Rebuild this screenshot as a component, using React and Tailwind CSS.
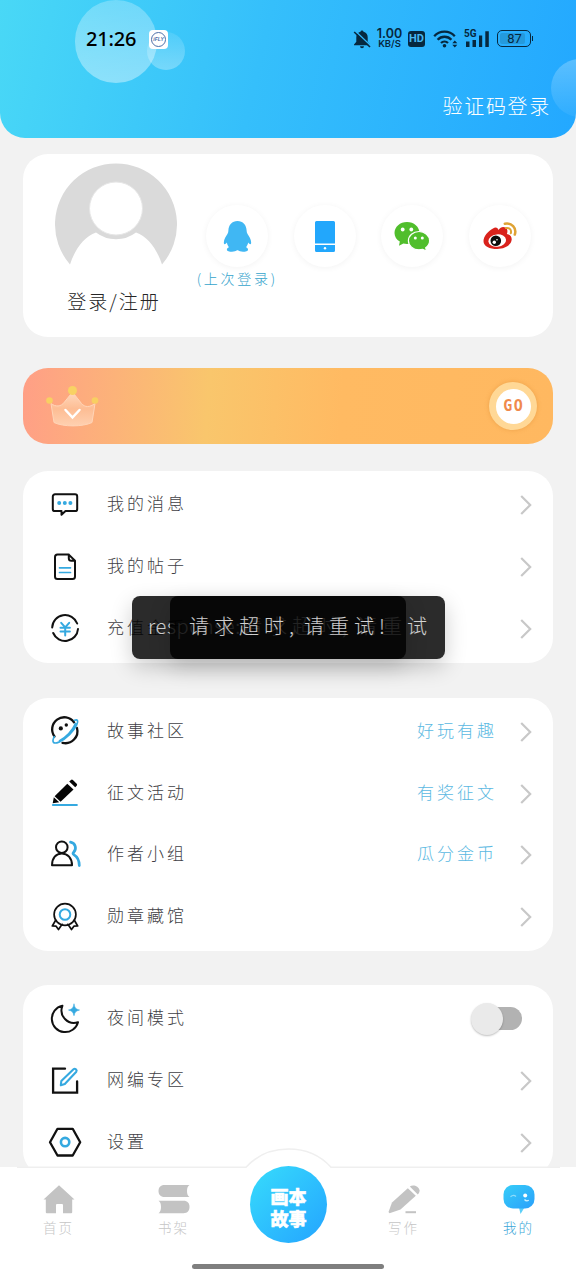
import { useState } from 'react';

const BLUE = '#35a9e0';

const MENU_MESSAGES = [
  { label: '我的消息', icon: 'message' },
  { label: '我的帖子', icon: 'post' },
  { label: '充值金币', icon: 'coin' },
];

const MENU_COMMUNITY = [
  { label: '故事社区', icon: 'planet', hint: '好玩有趣' },
  { label: '征文活动', icon: 'pen', hint: '有奖征文' },
  { label: '作者小组', icon: 'group', hint: '瓜分金币' },
  { label: '勋章藏馆', icon: 'medal' },
];

const MENU_SETTINGS = [
  { label: '夜间模式', icon: 'moon', toggle: true },
  { label: '网编专区', icon: 'edit' },
  { label: '设置', icon: 'settings' },
];

const ICONS = {
  message: (
    <>
      <path d="M8 7.300h20a2.200 2.200 0 0 1 2.200 2.200v12.400a2.200 2.200 0 0 1-2.200 2.200H18.500L14.500 27.800v-3.700H8a2.200 2.200 0 0 1-2.200-2.200V9.500A2.200 2.200 0 0 1 8 7.300z" />
      <g fill={BLUE} stroke="none">
        <circle cx="12.200" cy="16" r="2" />
        <circle cx="17.800" cy="16" r="2" />
        <circle cx="23.400" cy="16" r="2" />
      </g>
    </>
  ),
  post: (
    <>
      <path d="M10.500 5.600h11.300l6.200 6.200v15.700a2.500 2.500 0 0 1-2.500 2.500h-15A2.500 2.500 0 0 1 8 27.500V8.100a2.500 2.500 0 0 1 2.500-2.500zM21.800 5.600v3.700a2.500 2.500 0 0 0 2.500 2.500H28" />
      <path d="M12.500 18.800h11M12.500 23.500h11" stroke={BLUE} strokeWidth="1.700" />
    </>
  ),
  coin: (
    <>
      <path d="M5.200 17.500A12.900 12.900 0 0 1 30.200 13.500M31 19A12.900 12.900 0 0 1 6.200 23" />
      <path d="M14.200 12.800l4 4.600 4-4.600M18.200 17.400v8M13.500 17.800h9.400M13.500 21.500h9.400" stroke={BLUE} strokeWidth="2" />
    </>
  ),
  planet: (
    <>
      <path d="M7.500 23.500A12 12 0 0 1 27 9.200M30 15A12 12 0 0 1 15.500 29.800" strokeWidth="2.300" />
      <path d="M27.500 7.300c3-1.400 4.200.5 2.200 4.600-2.800 6-10.500 14.200-17.800 17.200-5.500 2.200-7.400.4-4.700-5.400M28.500 10.500c-3 6.500-9.500 13.500-16 17.200" stroke={BLUE} strokeWidth="1.700" />
      <circle cx="13.800" cy="15.400" r="2.100" fill="#111" stroke="none" />
      <circle cx="19.300" cy="12" r="1.700" fill="#111" stroke="none" />
    </>
  ),
  pen: (
    <>
      <g fill="#050505" stroke="none">
        <path d="M20.300 8.800l6.200 5.800-12.900 12.200-6-5.500z" />
        <path d="M22.200 6.500l1.800-1.500a1.400 1.400 0 0 1 1.900.1l3.800 3.700a1.400 1.400 0 0 1 0 1.900l-1.500 1.600z" />
        <path d="M6.800 22.300l5.400 5L5.700 28.300z" />
      </g>
      <path d="M5.900 30h24" stroke={BLUE} strokeWidth="2" />
    </>
  ),
  group: (
    <>
      <circle cx="14.800" cy="10.200" r="5.800" />
      <path d="M5 28.200c0-7 4-11.800 9.800-11.800s10.200 4.800 10.200 11.800z" />
      <path d="M23.500 5.200c5.200 1 6.500 6.700 3 10.300-.8.900-.7 1.500.3 2.100 3.600 2.200 5.500 5.800 5.500 11" stroke={BLUE} strokeWidth="2.700" />
    </>
  ),
  medal: (
    <g strokeWidth="1.700">
      <circle cx="18" cy="15.500" r="10.900" />
      <circle cx="18" cy="15.500" r="5.300" stroke={BLUE} strokeWidth="2" />
      <path d="M8.500 21.500L5.300 27l3.800.2 2.400 3.300 3.600-5.200M27.500 21.500l3.200 5.500-3.800.2-2.400 3.300-3.600-5.200" />
    </g>
  ),
  moon: (
    <>
      <path d="M15.400 4.800A13.300 13.300 0 1 0 31 21.200 12.500 12.500 0 0 1 15.400 4.800z" />
      <path d="M27 3.200c.9 4 1.800 4.900 5.500 5.800-3.700 1-4.600 1.900-5.500 5.700-.9-3.800-1.800-4.700-5.500-5.700 3.700-.9 4.600-1.800 5.500-5.800z" fill={BLUE} stroke={BLUE} strokeWidth=".6" />
    </>
  ),
  edit: (
    <>
      <path d="M18 5.700H6.100v24h24V18.500" strokeWidth="2.300" strokeLinejoin="miter" />
      <path d="M14.300 18L26.500 6.200c1.500-1.200 4 .8 2.800 2.500L17.800 21l-4 1.300z" stroke={BLUE} strokeWidth="2.100" />
    </>
  ),
  settings: (
    <>
      <path d="M10.500 4.800h15.200L33.200 18.200l-7.500 13.300H10.500L3 18.200z" strokeWidth="2.300" />
      <circle cx="18.100" cy="18.100" r="4.200" stroke={BLUE} strokeWidth="2.600" />
    </>
  ),
};

const MenuIcon = ({ name }) => (
  <svg
    viewBox="0 0 36 36"
    className="w-9 h-9 shrink-0"
    fill="none"
    stroke="#111"
    strokeWidth="2"
    strokeLinejoin="round"
    strokeLinecap="round"
  >
    {ICONS[name]}
  </svg>
);

const Chevron = () => (
  <svg viewBox="0 0 12 20" className="w-3 h-5 mt-px" fill="none" stroke="#c8c8c8" strokeWidth="2.200">
    <path d="M1.200 1l9 9-9 9" />
  </svg>
);

const MenuCard = ({ items, className = '', renderToggle }) => (
  <div className={`bg-white rounded-[25px] pl-6 pr-[21px] shrink-0 ${className}`}>
    {items.map((item) => (
      <div key={item.label} className="h-[61.800px] flex items-center">
        <MenuIcon name={item.icon} />
        <span className="ml-6 text-[17px] leading-6 tracking-[3px] text-[#3f3f46] pb-[3px]">{item.label}</span>
        <div className="ml-auto flex items-center">
          {item.hint && (
            <span className="mr-[23px] text-[17px] leading-6 tracking-[3px] text-[#5bb9e2] pb-[3px]">{item.hint}</span>
          )}
          {item.toggle ? renderToggle() : <Chevron />}
        </div>
      </div>
    ))}
  </div>
);

const StatusBar = () => (
  <div className="relative h-[78px] pl-[86px] pr-[43px] flex items-center justify-between text-black">
    <div className="flex items-center">
      <span className="w-[52px] font-['Noto_Sans','Open_Sans',sans-serif] font-medium text-[20px] leading-6 tracking-[-0.200px]">21:26</span>
      <div className="ml-[11px] w-[19px] h-[19px] rounded bg-white flex items-center justify-center">
        <div className="w-[15px] h-[15px] rounded-full border border-[#4c6fa8] flex items-center justify-center">
          <span className="font-['Liberation_Sans',sans-serif] font-bold italic text-[5px] leading-none text-[#4c6fa8]">iFLY</span>
        </div>
      </div>
    </div>
    <div className="flex items-center text-[#06283f] -mt-px">
      <svg viewBox="0 0 18 20" className="w-[18px] h-5" fill="currentColor">
        <path d="M9 1.500a1.500 1.500 0 0 1 1.500 1.300c2.700.7 4.200 2.700 4.200 5.400v4.500l2.300 2.800v.8H1v-.8l2.300-2.800V8.200c0-2.700 1.500-4.700 4.200-5.400A1.500 1.500 0 0 1 9 1.500zM7 17.200h4a2 2 0 0 1-4 0z" />
        <path d="M2 1.800L18 17" stroke="#2fb7fd" strokeWidth="1.500" />
        <path d="M1.200 3L17 18" stroke="currentColor" strokeWidth="1.600" />
      </svg>
      <div className="ml-[5px] pt-px w-[27px] flex flex-col items-center font-['Inter','Liberation_Sans',sans-serif] font-semibold">
        <span className="text-[12.500px] leading-[10px]">1.00</span>
        <span className="text-[9.500px] leading-[10px]">KB/S</span>
      </div>
      <div className="ml-[5px] w-[17px] h-4 rounded-[3px] bg-[#06283f] flex items-center justify-center">
        <span className="font-['Roboto','Liberation_Sans',sans-serif] font-bold text-[11px] leading-none text-[#46b8f2]">HD</span>
      </div>
      <svg viewBox="0 0 25 20" className="ml-2 w-[25px] h-5" fill="none" stroke="currentColor" strokeWidth="2.300">
        <path d="M1.200 7.200a14 14 0 0 1 20.600 0M4.600 10.800a9.300 9.300 0 0 1 13.800 0M8 14a5 5 0 0 1 7 0" />
        <circle cx="11.500" cy="16.800" r="1.800" fill="currentColor" stroke="none" />
        <path d="M19.300 14.300L21.800 11.500l2.500 2.800zM19.300 15.800l2.500 2.700 2.500-2.700z" fill="currentColor" stroke="none" />
      </svg>
      <div className="relative ml-[6px] w-[26px] h-5">
        <span className="absolute left-0 top-0 font-['Roboto','Liberation_Sans',sans-serif] font-bold text-[10px] leading-[10px]">5G</span>
        <svg viewBox="0 0 26 20" className="w-[26px] h-5" fill="currentColor">
          <path d="M2 12.500h3.500V18H2zM8.500 11H12v7H8.500zM15 6.500h3.200V18H15zM21.300 2.300h3.500V18h-3.500z" />
        </svg>
      </div>
      <div className="ml-[7px] w-[34px] h-[17px] rounded-[5px] border-[1.500px] border-[#06283f] p-0.5">
        <div className="w-[25px] h-full rounded-xs bg-[#249add] flex items-center justify-center">
          <span className="pl-1 font-['Roboto','Liberation_Sans',sans-serif] font-normal text-[13px] leading-none">87</span>
        </div>
      </div>
      <div className="ml-px w-px h-[5px] bg-[#06283f]" />
    </div>
  </div>
);

const LoginOption = ({ children, note }) => (
  <div className="w-[87.500px] flex flex-col items-center">
    <div className="w-[62px] h-[62px] rounded-full bg-white shadow-[0_1px_6px_rgba(0,0,0,0.050)] flex items-center justify-center">
      {children}
    </div>
    {note && <span className="text-[14px] leading-[22px] tracking-[2.700px] whitespace-nowrap text-[#35a4cc]">{note}</span>}
  </div>
);

const LoginCard = () => (
  <div className="mt-4 h-[183px] shrink-0 bg-white rounded-[25px] flex">
    <div className="ml-8 w-[122px] flex flex-col items-center">
      <svg viewBox="0 0 122 102" className="mt-[9px] w-[122px] h-[102px] shrink-0">
        <path d="M15 101.500A61 61 0 1 1 107 101.500C102 86 93 74 81 69.500a33 33 0 0 1-40 0C29 74 20 86 15 101.500z" fill="#dadada" />
        <circle cx="61" cy="45.500" r="26.500" fill="#fff" stroke="#e6e6e6" strokeWidth="1" />
      </svg>
      <span className="mt-[22px] -ml-1 text-[19px] leading-7 tracking-[2px] text-[#262626] whitespace-nowrap">登录/注册</span>
    </div>
    <div className="ml-[16.500px] pt-[51px] flex items-start">
      <LoginOption note="(上次登录)">
        <svg viewBox="0 0 30 32" className="w-[29px] h-[31px]" fill="#40b7f3">
          <path d="M15 0c5.600 0 9.300 4.200 9.400 9.600 0 1.400.3 2.700 1 3.800 1.800 2.800 4 6.200 3.700 9.500-.2 1.500-1.700 1.300-3-.6-.4 1.900-1.100 3.400-2.200 4.800 1.300.6 2 1.400 2 2.500 0 2.500-8.500 2.800-10.400.7h-1C12.600 32.400 4 32.100 4 29.600c0-1.100.8-1.900 2.100-2.500-1.100-1.400-1.800-2.900-2.200-4.800-1.300 1.900-2.800 2.100-3 .6-.3-3.300 1.900-6.700 3.700-9.500.7-1.100 1-2.400 1-3.800C5.700 4.200 9.400 0 15 0z" />
        </svg>
      </LoginOption>
      <LoginOption>
        <svg viewBox="0 0 20 31" className="w-5 h-[31px]" fill="#22a7fc">
          <path d="M1.500 0h17A1.500 1.500 0 0 1 20 1.500V22.500H0v-21A1.500 1.500 0 0 1 1.500 0zM0 24h20v5.500a1.500 1.500 0 0 1-1.500 1.500h-17A1.500 1.500 0 0 1 0 29.500z" />
          <circle cx="10" cy="27.200" r="1.200" fill="#fff" />
        </svg>
      </LoginOption>
      <LoginOption>
        <svg viewBox="0 0 36 31" className="w-9 h-[31px]" fill="#50be2c">
          <path d="M13 1c6.900 0 12.500 4.900 12.500 11S19.900 23 13 23c-1.300 0-2.500-.1-3.600-.4L5 24.800l.8-4.200C2.500 18.700.5 15.600.5 12 .5 5.900 6.100 1 13 1z" />
          <path d="M25 10.500c5.900 0 10.600 4.100 10.600 9.200 0 2.900-1.500 5.300-3.900 7l.8 3.300-3.800-1.700c-1.100.3-2.300.5-3.700.5-5.900 0-10.600-4.100-10.600-9.100s4.700-9.200 10.600-9.200z" stroke="#fff" strokeWidth="1.200" />
          <g fill="#fff">
            <circle cx="8.700" cy="8.500" r="1.900" />
            <circle cx="17.300" cy="8.500" r="1.900" />
            <circle cx="21.300" cy="17" r="1.500" />
            <circle cx="28.300" cy="17" r="1.500" />
          </g>
        </svg>
      </LoginOption>
      <LoginOption>
        <svg viewBox="0 0 34 28" className="w-[34px] h-7">
          <path d="M10 6.500C12.500 4.800 15 5.500 15.400 8 17.500 5 20 4.200 22.500 5.500c2.300 1.300 2.200 4.500 1.400 6.500 3 .8 5 2.600 4.800 5.600-.4 5.500-7 9.400-14.500 9.400S.5 24.500.5 19C.5 14 5.500 9 10 6.500z" fill="#d9221c" />
          <ellipse cx="14.200" cy="18.600" rx="8.900" ry="6.200" fill="#fff" transform="rotate(-6 14.200 18.600)" />
          <circle cx="12.800" cy="18.800" r="5.300" fill="#0b0b0b" />
          <circle cx="11.300" cy="20.300" r="1.700" fill="#fff" />
          <circle cx="14" cy="17.800" r=".8" fill="#fff" />
          <path d="M21.800 1.700C28.500.3 34 6 31.800 12.500" fill="none" stroke="#dfa335" strokeWidth="2.500" strokeLinecap="round" />
          <path d="M23 6c3.500-.6 5.800 2 4.800 5.300" fill="none" stroke="#dfa335" strokeWidth="2" strokeLinecap="round" />
        </svg>
      </LoginOption>
    </div>
  </div>
);

const VipBanner = () => (
  <div className="mt-[31px] h-[76px] shrink-0 rounded-[25px] bg-[linear-gradient(94deg,#ff9f86_0%,#f9c66c_35%,#ffba62_60%,#ffb860_100%)] pl-[23px] pr-4 flex items-center justify-between">
    <svg viewBox="0 0 54 42" className="w-[54px] h-[42px]">
      <defs>
        <linearGradient id="crown" x1="0" y1="0" x2="0" y2="1">
          <stop offset="0" stopColor="#ffd9bd" />
          <stop offset=".5" stopColor="#fdbd94" />
          <stop offset="1" stopColor="#ffd0b0" />
        </linearGradient>
      </defs>
      <path d="M5 18.500c4.500 3.500 10 3.500 13.500-1.500L26.500 7l9 11.500c3.500 4 8 4 13.500 0l-3 19c-9 4.500-29 4.500-38 0z" fill="url(#crown)" stroke="#ffd5b8" strokeWidth="1" strokeLinejoin="round" />
      <circle cx="26.500" cy="5.500" r="4.500" fill="#f8d264" />
      <circle cx="3.500" cy="15.500" r="3.300" fill="#f8cf62" />
      <circle cx="49" cy="15.500" r="3.300" fill="#f8cf62" />
      <path d="M19.500 25l7 7.500 7-7.500" fill="none" stroke="#fff" strokeWidth="2.500" strokeLinecap="round" />
    </svg>
    <div className="w-12 h-12 rounded-full bg-[#ffd896] shadow-[0_0_4px_rgba(210,130,40,0.400)] flex items-center justify-center">
      <div className="w-[35px] h-[35px] rounded-full bg-white flex items-center justify-center">
        <span className="font-['DejaVu_Sans_Mono',monospace] font-bold text-[15px] leading-none tracking-[1.500px] -mr-[1.500px] pt-px text-[#f08a4c]">GO</span>
      </div>
    </div>
  </div>
);

// two toasts fired at once, the later one covers the first
const Toasts = () => (
  <>
    <div className="absolute left-[132px] top-[596px] w-[313px] h-[63px] rounded-lg bg-black/[0.830] shadow-[0_8px_22px_rgba(0,0,0,0.200)] flex items-center pl-4 pb-1 text-[20px] text-white/80 whitespace-nowrap">
      <span className="w-[94px] tracking-[0.600px]">response:</span>
      <span className="tracking-[5px]">请求超时</span>
      <span className="w-[15px]">,</span>
      <span className="tracking-[5px]">请重试</span>
    </div>
    <div className="absolute left-[170px] top-[596px] w-[236px] h-[63px] rounded-lg bg-black/[0.830] shadow-[0_8px_22px_rgba(0,0,0,0.160)] flex items-center pl-[19px] pb-1 text-[20px] text-white/80 whitespace-nowrap">
      <span className="tracking-[5px]">请求超时</span>
      <span className="w-[15px]">,</span>
      <span className="tracking-[5px]">请重试!</span>
    </div>
  </>
);

const TabItem = ({ label, active, children }) => (
  <div className="flex flex-col items-center pt-[17px]">
    <svg viewBox="0 0 32 30" className="w-8 h-[30px]" fill="#c3c3c3">
      {children}
    </svg>
    <span className={`mt-[3px] text-[13.500px] leading-5 tracking-[2px] ${active ? 'text-[#3ba7d8]' : 'text-[#c6c6c6]'}`}>
      {label}
    </span>
  </div>
);

const TabBar = () => (
  <nav className="relative h-[113px] bg-white">
    <svg viewBox="0 0 576 20" className="absolute left-0 -top-[19px] w-[576px] h-5">
      <path d="M246 20C268-5 309-5 331 20z" fill="#fff" />
      <path d="M17 19.300H246C268-5 309-5 331 19.300H560" fill="none" stroke="#efefef" strokeWidth="1.500" />
    </svg>
    <div className="relative grid grid-cols-5 pl-px">
      <TabItem label="首页">
        <path d="M16 1.200L31.500 15.500h-2.300V28.300a1 1 0 0 1-1 1H20V21a1 1 0 0 0-1-1h-5a1 1 0 0 0-1 1v8.300H3.800a1 1 0 0 1-1-1V15.500H.5z" />
      </TabItem>
      <TabItem label="书架">
        <path d="M6.500 1H31.500C29.800 2 29 4 29 7s.8 5 2.500 6H6.500C2.500 13 .5 10.500.5 7S2.500 1 6.500 1z" />
        <path d="M.5 16.800h25c4 0 6 2.500 6 6.200s-2 6.200-6 6.200H.5C2.200 28 3 26 3 23s-.8-5.200-2.500-6.200z" />
      </TabItem>
      <div className="flex justify-center">
        <div className="-mt-px w-[77px] h-[77px] rounded-full bg-[linear-gradient(135deg,#37dcfc,#24a4ff)] flex flex-col items-center justify-center pt-1 font-black text-[18px] leading-[22px] text-white [-webkit-text-stroke:0.500px_white]">
          <span>画本</span>
          <span>故事</span>
        </div>
      </div>
      <TabItem label="写作">
        <path d="M19.800 4.200l8 7.600L12.500 25.500 1.500 29.300.5 28 4 18.500z" />
        <path d="M21.800 2.500c3-2.500 9-.5 9.700 3.700.2 1.600-.5 3-1.700 4.200z" />
        <path d="M17.500 27.200H28v2H17.500z" />
      </TabItem>
      <TabItem label="我的" active>
        <defs>
          <linearGradient id="bubble" x1="0" y1="0" x2="1" y2="1">
            <stop offset="0" stopColor="#36cdf8" />
            <stop offset="1" stopColor="#2aa0fb" />
          </linearGradient>
        </defs>
        <path d="M16 23.500h5.500L17.500 30z" fill="#5bcff8" />
        <rect x=".5" y="1" width="31" height="23.500" rx="9.500" fill="url(#bubble)" />
        <path d="M7.500 12.800q3-2.800 5.500-.3" fill="none" stroke="#8edcfb" strokeWidth="1.300" />
        <circle cx="22.200" cy="11.500" r="2" fill="#fff" />
        <path d="M21.500 15.500q1.800 2.200 4.300.8" fill="none" stroke="#c8f0ff" strokeWidth="1.300" />
      </TabItem>
    </div>
    <div className="absolute left-[192px] top-[97px] w-48 h-[5px] rounded-full bg-[#7f7f7f]" />
  </nav>
);

const App = () => {
  const [nightMode, setNightMode] = useState(false);

  const renderToggle = () => (
    <button
      onClick={() => setNightMode(!nightMode)}
      className={`mr-[10px] w-[51px] h-8 flex items-center ${nightMode ? 'justify-end' : 'justify-start'}`}
    >
      <div className="h-8 w-8 shrink-0 z-10 rounded-full bg-[#eaeaea] shadow-[0_1px_2px_rgba(0,0,0,0.250)]" />
      <div className="-ml-5 w-[39px] shrink-0 h-[23px] rounded-full bg-[#b2b2b2]" />
    </button>
  );

  return (
    <div className="relative w-[576px] h-[1280px] overflow-hidden bg-[#f2f2f2] font-light font-['Noto_Sans_CJK_SC',sans-serif]">
      <div className="h-[1167px] overflow-hidden flex flex-col">
        <header className="relative h-[138px] shrink-0 overflow-hidden rounded-b-[25px] bg-[linear-gradient(103deg,#49d8f6_0%,#35bffb_45%,#23a8ff_100%)]">
          <div className="absolute left-[147px] top-8 w-[38px] h-[38px] rounded-full bg-linear-to-b from-white/10 to-white/30" />
          <div className="absolute left-[75px] top-0 w-[82px] h-[83px] rounded-full bg-linear-to-b from-white/25 to-white/40" />
          <div className="absolute left-[551px] top-[59px] w-[58px] h-[58px] rounded-full bg-linear-to-b from-white/25 to-white/5" />
          <StatusBar />
          <div className="relative mt-[14px] pr-[25px] text-right text-[20px] leading-7 tracking-[1.700px] text-white">验证码登录</div>
        </header>
        <main className="px-[23px] flex flex-col">
          <LoginCard />
          <VipBanner />
          <MenuCard items={MENU_MESSAGES} className="mt-[27px] pt-[3px] h-[192px]" />
          <MenuCard items={MENU_COMMUNITY} className="mt-[34.500px] pt-[3px] h-[253px]" />
          <MenuCard items={MENU_SETTINGS} className="mt-[34.500px] pt-[3px] h-[191px]" renderToggle={renderToggle} />
        </main>
      </div>
      <TabBar />
      <Toasts />
    </div>
  );
};

export default App;
